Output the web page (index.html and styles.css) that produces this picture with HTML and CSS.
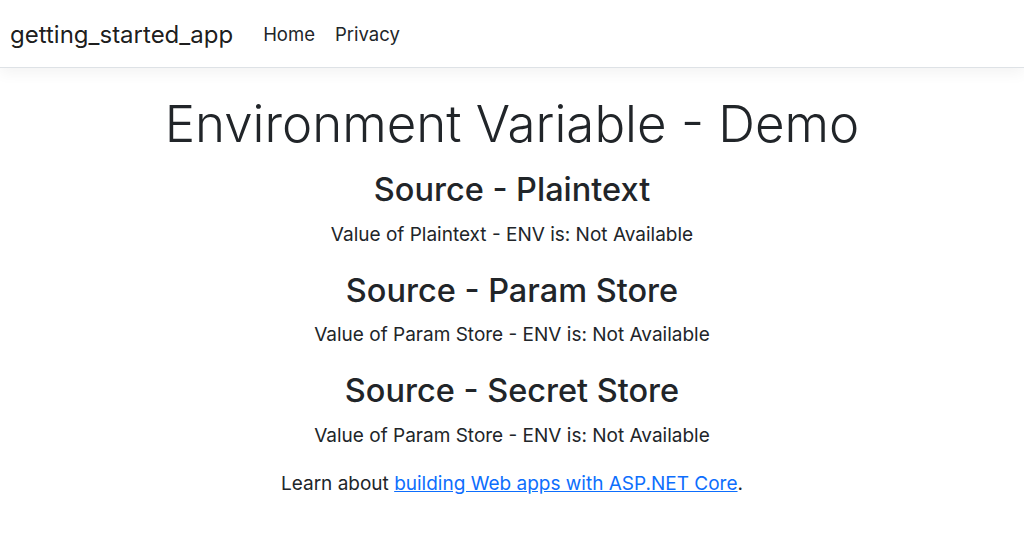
FILE: index.html
```html
<!DOCTYPE html>
<html lang="en">
<head>
	<meta charset="UTF-8">
	<title>Home Page - getting_started_app</title>
	<link rel="stylesheet" href="styles.css">
</head>
<body>
	<header>
		<nav class="navbar">
			<div class="container-fluid">
				<a class="navbar-brand" href="#">getting_started_app</a>
				<ul class="navbar-nav">
					<li><a class="nav-link" href="#">Home</a></li>
					<li><a class="nav-link" href="#">Privacy</a></li>
				</ul>
			</div>
		</nav>
	</header>
	<div class="container">
		<main role="main" class="pb-3">
			<div class="text-center">
				<h1 class="display-4">Environment Variable - Demo</h1>
				<h2>Source - Plaintext</h2>
				<p>Value of Plaintext - ENV is: Not Available</p>
				<h2>Source - Param Store</h2>
				<p>Value of Param Store - ENV is: Not Available</p>
				<h2>Source - Secret Store</h2>
				<p>Value of Param Store - ENV is: Not Available</p>
				<p class="learn">Learn about <a href="#">building Web apps with ASP.NET Core</a>.</p>
			</div>
		</main>
	</div>
</body>
</html>
```

FILE: styles.css
```css
* {
	box-sizing: border-box;
}
body {
	margin: 0;
	font-family: Inter, "Noto Sans", "Liberation Sans", sans-serif;
	font-size: 19px;
	line-height: 1.5;
	color: #212529;
	background: #fff;
}
ul {
	list-style: none;
	padding: 0;
	margin: 0;
}
a {
	text-decoration: none;
}
/* 顶部导航 */
.navbar {
	height: 68px;
	background: #fff;
	border-bottom: 1px solid #dee2e6;
	box-shadow: 0 5px 14px rgba(0, 0, 0, .05);
	margin-bottom: 25px;
}
.container-fluid {
	height: 100%;
	display: flex;
	align-items: center;
	padding: 2px 10px 0;
}
.navbar-brand {
	font-size: 24px;
	color: rgba(0, 0, 0, .9);
	margin-right: 20px;
}
.navbar-nav {
	display: flex;
}
.nav-link {
	display: block;
	padding: 0 10px;
	font-size: 18.5px;
	color: #212529;
}
/* 主体内容 */
.container {
	padding: 0 14px;
}
.text-center {
	text-align: center;
}
h1, h2 {
	margin: 0;
	font-weight: 500;
	line-height: 1.2;
}
.display-4 {
	font-size: 51px;
	font-weight: 300;
	margin-bottom: 16px;
}
h2 {
	font-size: 32.5px;
	margin-bottom: 11.5px;
}
p {
	margin: 0 0 21.5px;
}
.learn {
	margin-top: -2px;
}
.learn a {
	color: #0d6efd;
	text-decoration: underline;
}
```
